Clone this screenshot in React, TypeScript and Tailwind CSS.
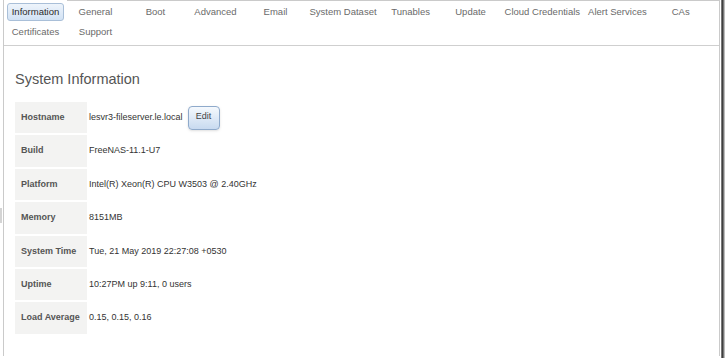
const tabRows = [
  [
    "Information",
    "General",
    "Boot",
    "Advanced",
    "Email",
    "System Dataset",
    "Tunables",
    "Update",
    "Cloud Credentials",
    "Alert Services",
    "CAs",
  ],
  ["Certificates", "Support"],
];

const rows = [
  { label: "Hostname", value: "lesvr3-fileserver.le.local", edit: true },
  { label: "Build", value: "FreeNAS-11.1-U7" },
  { label: "Platform", value: "Intel(R) Xeon(R) CPU W3503 @ 2.40GHz" },
  { label: "Memory", value: "8151MB" },
  { label: "System Time", value: "Tue, 21 May 2019 22:27:08 +0530" },
  { label: "Uptime", value: "10:27PM up 9:11, 0 users" },
  { label: "Load Average", value: "0.15, 0.15, 0.16" },
];

function Tab({ label }: { label: string }) {
  const active = label === "Information";
  return (
    <div
      className={
        active
          ? "flex h-[18px] min-w-[57px] items-center justify-center rounded-[3px] border border-[#a9bfd8] bg-linear-to-b from-[#eef4fb] to-[#d2e2f4] px-[2px] text-[#2a2a2a]"
          : "flex h-[18px] min-w-[57px] items-center justify-center px-[2.5px] text-[#6a6a6a]"
      }
    >
      {label}
    </div>
  );
}

export default function App() {
  return (
    <div className="flex h-[358px] w-[725px] items-start overflow-hidden bg-white font-['Liberation_Sans',Arial,sans-serif] text-[9px]">
      <div className="h-full w-[3px] shrink-0">
        <div className="mt-[208px] h-[15px] w-[2px] bg-[#d4d4d4]" />
      </div>

      <div className="flex h-[356px] min-w-0 flex-1 flex-col border-x border-[#cacaca]">
        <div className="flex h-px">
          <div className="w-[63px]" />
          <div className="flex-1 bg-[#cacaca]" />
        </div>

        <div className="mt-[2px] flex flex-col gap-[2px] border-b border-[#cfcfcf] px-[3px] pb-[4px] text-[9.5px]">
          {tabRows.map((row, i) => (
            <div key={i} className="flex gap-[3px]">
              {row.map((t) => (
                <Tab key={t} label={t} />
              ))}
            </div>
          ))}
        </div>

        <div className="pl-[11px]">
          <h1 className="mt-[25px] text-[14.5px] leading-[17px] text-[#555]">
            System Information
          </h1>

          <div className="mt-[14px] flex flex-col gap-[2px]">
            {rows.map((r) => (
              <div key={r.label} className="flex h-[31.4px]">
                <div className="flex w-[72px] items-center bg-[#f3f3f2] pl-[6px] font-bold text-[#555]">
                  {r.label}
                </div>
                <div className="ml-[2px] flex items-center text-[#333]">
                  {r.value}
                  {r.edit && (
                    <button className="ml-[5px] h-[24px] w-[32px] rounded-[4px] border border-[#8faacb] bg-linear-to-b from-[#f5f9fd] to-[#c8daf0] pb-[2px] text-[9px] text-[#444] shadow-sm">
                      Edit
                    </button>
                  )}
                </div>
              </div>
            ))}
          </div>
        </div>
      </div>

      <div className="h-full w-px" />
      <div className="h-full w-[3px] border-x border-[#777] bg-[#3f3f3f]" />
      <div className="h-full w-px bg-[#bdbdbd]" />
    </div>
  );
}
